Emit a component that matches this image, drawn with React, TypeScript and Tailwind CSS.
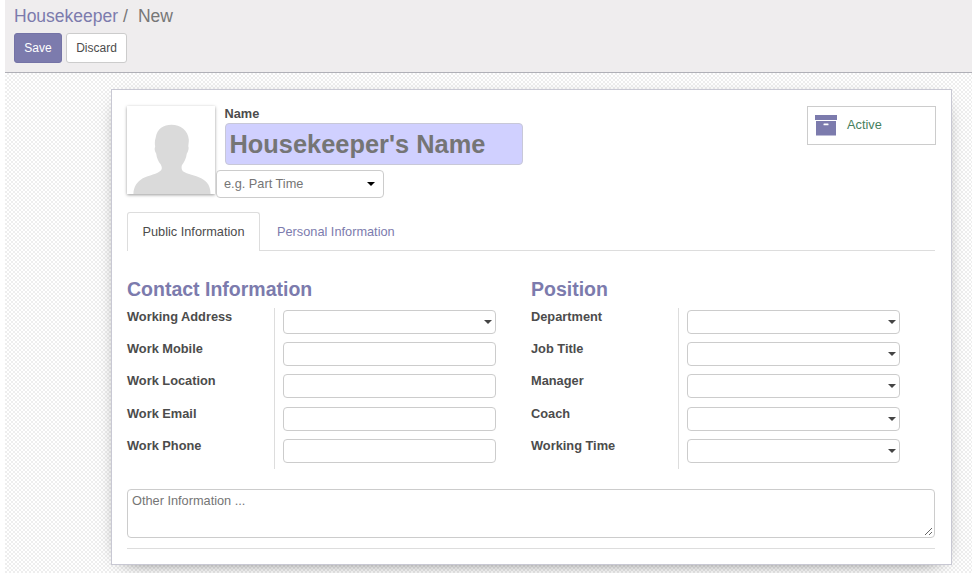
import React from 'react';

const contactFields = [
  { label: 'Working Address', select: true },
  { label: 'Work Mobile', select: false },
  { label: 'Work Location', select: false },
  { label: 'Work Email', select: false },
  { label: 'Work Phone', select: false },
];

const positionFields = [
  { label: 'Department', select: true },
  { label: 'Job Title', select: true },
  { label: 'Manager', select: true },
  { label: 'Coach', select: true },
  { label: 'Working Time', select: true },
];

function Caret({ className }: { className: string }) {
  return (
    <svg viewBox="0 0 8 4" className={`h-1 w-2 ${className}`} fill="currentColor">
      <path d="M0 0h8L4 4z" />
    </svg>
  );
}

function Avatar() {
  return (
    <div className="h-[88px] w-[88px] shrink-0 overflow-hidden bg-white shadow-[0_1px_3px_rgba(0,0,0,0.4)]">
      <svg viewBox="0 0 89 89" className="h-full w-full" fill="#dadada">
        <path d="M45 19C54 19 62 25 62.500 34C62.700 37 62 39 62 41C63 43 61.500 47 60.500 48C60 53 57.500 57 55.500 60C55 62 55 64 56.500 66C61 69 69 70 75 73C82 76.500 84.500 82 84.500 89H6.500C6.500 82 10 76.500 16 73C22 70 31 69 34.500 65C36 63 35 61 34 59C31.500 56 30 52 29.500 48C28 46 27.500 43 28.500 41C28 38 28 35 29 32C30.500 23 37 19 45 19Z" />
      </svg>
    </div>
  );
}

function FieldGroup({ title, fields }: { title: string; fields: { label: string; select: boolean }[] }) {
  return (
    <section className="w-[404px]">
      <h2 className="h-[31px] text-[19.5px] leading-6 font-bold text-[#7c7bad]">{title}</h2>
      <div className="flex">
        <div className="w-[147px]">
          {fields.map((f) => (
            <div key={f.label} className="h-[32.2px] text-[12.8px] leading-[17px] font-bold text-[#4c4c4c]">
              {f.label}
            </div>
          ))}
        </div>
        <div className="border-l border-[#ddd] pl-[8px]">
          {fields.map((f) => (
            <div key={f.label} className="h-[32.2px] pt-[2px]">
              <div className="flex h-6 w-[213px] items-center justify-end rounded-[4px] border border-[#ccc] pr-[3px]">
                {f.select && <Caret className="text-[#444]" />}
              </div>
            </div>
          ))}
        </div>
      </div>
    </section>
  );
}

export default function App() {
  return (
    <div className="h-[573px] w-[976px] overflow-hidden bg-white pr-1 pl-[5px] font-['Liberation_Sans',Arial,sans-serif] text-[12.75px] text-[#4c4c4c]">
      <header className="h-[73px] border-b border-[#afafb6] bg-[#efedee] pt-[5px] pl-[9px]">
        <div className="flex h-7 text-[17.5px] leading-[22px] whitespace-pre text-[#777]">
          <span className="text-[#7c7bad]">Housekeeper</span>
          <span className="pl-[5px]">/</span>
          <span className="pl-[10px]">New</span>
        </div>
        <div className="flex gap-1 text-xs">
          <button className="h-[30px] w-12 rounded-[3px] border border-[#7473a6] bg-[#7c7bad] text-white">Save</button>
          <button className="h-[30px] w-[61px] rounded-[3px] border border-[#ccc] bg-white">Discard</button>
        </div>
      </header>

      <main className="h-[500px] overflow-hidden bg-white bg-[conic-gradient(#eee_25%,#fff_0_50%,#eee_0_75%,#fff_0)] bg-[length:4px_4px] pt-4 pl-[106px]">
        <div className="h-[476px] w-[841px] border border-[#c8c8d3] bg-white pt-4 pl-[15px] shadow-[0_5px_20px_-13px_black]">
          <div className="flex h-[106px] w-[809px]">
            <Avatar />
            <div className="w-[320px] pl-px">
              <div className="pl-[8.5px]">
                <div className="h-[17px] leading-4 font-bold">Name</div>
                <div className="h-[42px] w-[298px] rounded-[4px] border border-[#c8c8d8] bg-[#d0d0ff] pl-[4px] text-[25.4px] leading-10 font-bold whitespace-nowrap text-[#757575]">
                  Housekeeper's Name
                </div>
              </div>
              <div className="mt-[5px] flex h-7 w-[168px] items-center justify-between rounded-[4px] border border-[#ccc] bg-white pr-2 pl-[7px] text-[#757575]">
                <span>e.g. Part Time</span>
                <Caret className="text-black" />
              </div>
            </div>
            <div className="ml-auto flex h-[39px] w-[129px] items-center border border-[#ccc] pl-[7px]">
              <svg viewBox="0 0 22 21" className="h-[21px] w-[22px]" fill="#7c7bad">
                <path d="M0 0h22v5H0zM1 6h20v14.500H1zM8.500 9Q8.500 8.500 9 8.500h4Q13.500 8.500 13.500 9v.7q0 .5-.5.5H9q-.5 0-.5-.5z" fillRule="evenodd" />
              </svg>
              <span className="pb-px pl-[10px] text-[#46805d]">Active</span>
            </div>
          </div>

          <nav className="flex h-[39px] w-[808px]">
            <div className="w-[133px] rounded-t-[3px] border border-b-0 border-[#ddd] pt-[11px] text-center leading-4">Public Information</div>
            <div className="flex-1 border-b border-[#ddd] pt-3 pl-[17px] leading-4 text-[#7c7bad]">Personal Information</div>
          </nav>

          <div className="flex h-[218px] pt-[26px]">
            <FieldGroup title="Contact Information" fields={contactFields} />
            <FieldGroup title="Position" fields={positionFields} />
          </div>

          <div className="mt-5 flex h-[49px] w-[808px] items-end rounded-[4px] border border-[#ccc] pl-1 text-[#757575]">
            <div className="h-full flex-1 pt-[3px] leading-4">Other Information ...</div>
            <svg viewBox="0 0 9 9" className="mb-px mr-px h-[9px] w-[9px]" stroke="#666" strokeWidth="1">
              <path d="M1 8L8 1M5 8L8 5" />
            </svg>
          </div>
          <div className="mt-[10px] w-[808px] border-t border-[#ddd]" />
        </div>
      </main>
    </div>
  );
}
